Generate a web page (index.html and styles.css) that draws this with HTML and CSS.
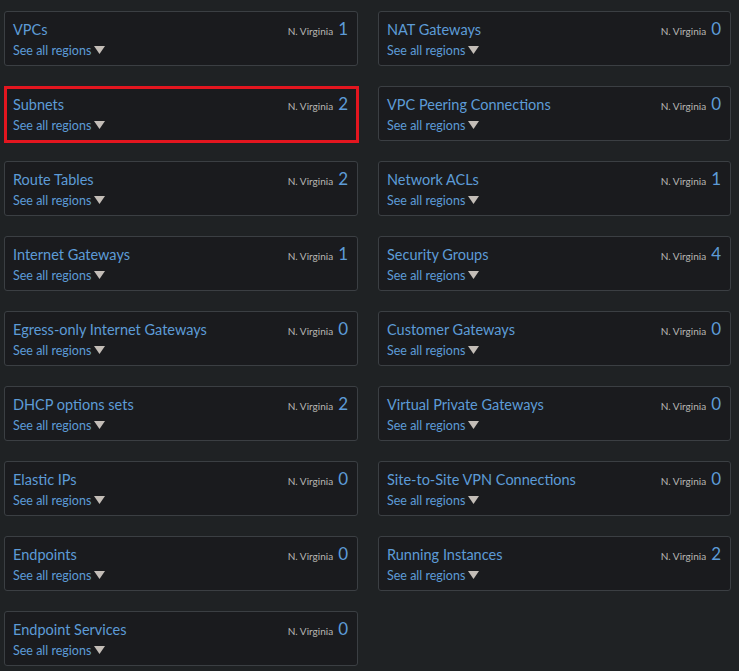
FILE: index.html
```html
<!DOCTYPE html>
<html>
<head>
<meta charset="utf-8">
<link rel="stylesheet" href="styles.css">
</head>
<body>
<div class="grid">
  <div class="card"><div class="row"><a class="title">VPCs</a><span class="meta"><span class="region">N. Virginia</span><span class="count">1</span></span></div><a class="link">See all regions<svg class="tri" viewBox="0 0 11 8"><path d="M0 0H11L5.5 8Z"/></svg></a></div>
  <div class="card"><div class="row"><a class="title">NAT Gateways</a><span class="meta"><span class="region">N. Virginia</span><span class="count">0</span></span></div><a class="link">See all regions<svg class="tri" viewBox="0 0 11 8"><path d="M0 0H11L5.5 8Z"/></svg></a></div>
  <div class="card hl"><div class="row"><a class="title">Subnets</a><span class="meta"><span class="region">N. Virginia</span><span class="count">2</span></span></div><a class="link">See all regions<svg class="tri" viewBox="0 0 11 8"><path d="M0 0H11L5.5 8Z"/></svg></a></div>
  <div class="card"><div class="row"><a class="title">VPC Peering Connections</a><span class="meta"><span class="region">N. Virginia</span><span class="count">0</span></span></div><a class="link">See all regions<svg class="tri" viewBox="0 0 11 8"><path d="M0 0H11L5.5 8Z"/></svg></a></div>
  <div class="card"><div class="row"><a class="title">Route Tables</a><span class="meta"><span class="region">N. Virginia</span><span class="count">2</span></span></div><a class="link">See all regions<svg class="tri" viewBox="0 0 11 8"><path d="M0 0H11L5.5 8Z"/></svg></a></div>
  <div class="card"><div class="row"><a class="title">Network ACLs</a><span class="meta"><span class="region">N. Virginia</span><span class="count">1</span></span></div><a class="link">See all regions<svg class="tri" viewBox="0 0 11 8"><path d="M0 0H11L5.5 8Z"/></svg></a></div>
  <div class="card"><div class="row"><a class="title">Internet Gateways</a><span class="meta"><span class="region">N. Virginia</span><span class="count">1</span></span></div><a class="link">See all regions<svg class="tri" viewBox="0 0 11 8"><path d="M0 0H11L5.5 8Z"/></svg></a></div>
  <div class="card"><div class="row"><a class="title">Security Groups</a><span class="meta"><span class="region">N. Virginia</span><span class="count">4</span></span></div><a class="link">See all regions<svg class="tri" viewBox="0 0 11 8"><path d="M0 0H11L5.5 8Z"/></svg></a></div>
  <div class="card"><div class="row"><a class="title">Egress-only Internet Gateways</a><span class="meta"><span class="region">N. Virginia</span><span class="count">0</span></span></div><a class="link">See all regions<svg class="tri" viewBox="0 0 11 8"><path d="M0 0H11L5.5 8Z"/></svg></a></div>
  <div class="card"><div class="row"><a class="title">Customer Gateways</a><span class="meta"><span class="region">N. Virginia</span><span class="count">0</span></span></div><a class="link">See all regions<svg class="tri" viewBox="0 0 11 8"><path d="M0 0H11L5.5 8Z"/></svg></a></div>
  <div class="card"><div class="row"><a class="title">DHCP options sets</a><span class="meta"><span class="region">N. Virginia</span><span class="count">2</span></span></div><a class="link">See all regions<svg class="tri" viewBox="0 0 11 8"><path d="M0 0H11L5.5 8Z"/></svg></a></div>
  <div class="card"><div class="row"><a class="title">Virtual Private Gateways</a><span class="meta"><span class="region">N. Virginia</span><span class="count">0</span></span></div><a class="link">See all regions<svg class="tri" viewBox="0 0 11 8"><path d="M0 0H11L5.5 8Z"/></svg></a></div>
  <div class="card"><div class="row"><a class="title">Elastic IPs</a><span class="meta"><span class="region">N. Virginia</span><span class="count">0</span></span></div><a class="link">See all regions<svg class="tri" viewBox="0 0 11 8"><path d="M0 0H11L5.5 8Z"/></svg></a></div>
  <div class="card"><div class="row"><a class="title">Site-to-Site VPN Connections</a><span class="meta"><span class="region">N. Virginia</span><span class="count">0</span></span></div><a class="link">See all regions<svg class="tri" viewBox="0 0 11 8"><path d="M0 0H11L5.5 8Z"/></svg></a></div>
  <div class="card"><div class="row"><a class="title">Endpoints</a><span class="meta"><span class="region">N. Virginia</span><span class="count">0</span></span></div><a class="link">See all regions<svg class="tri" viewBox="0 0 11 8"><path d="M0 0H11L5.5 8Z"/></svg></a></div>
  <div class="card"><div class="row"><a class="title">Running Instances</a><span class="meta"><span class="region">N. Virginia</span><span class="count">2</span></span></div><a class="link">See all regions<svg class="tri" viewBox="0 0 11 8"><path d="M0 0H11L5.5 8Z"/></svg></a></div>
  <div class="card"><div class="row"><a class="title">Endpoint Services</a><span class="meta"><span class="region">N. Virginia</span><span class="count">0</span></span></div><a class="link">See all regions<svg class="tri" viewBox="0 0 11 8"><path d="M0 0H11L5.5 8Z"/></svg></a></div>
</div>
</body>
</html>
```
FILE: styles.css
```css
html, body {
  margin: 0;
  padding: 0;
  background: #1f2224;
  height: 100%;
}
body {
  font-family: Lato, "Open Sans", sans-serif;
  overflow: hidden;
}
.grid {
  display: grid;
  grid-template-columns: 354px 353px;
  column-gap: 20px;
  row-gap: 20px;
  align-items: start;
  padding: 11px 8px 0 4px;
}
.card {
  box-sizing: border-box;
  height: 55px;
  background: #1a1b1e;
  border: 1px solid #3b3f43;
  border-radius: 3px;
  padding: 7px 9px 0 8px;
}
.card.hl {
  border: 3px solid #e3161f;
  border-radius: 0;
  padding: 5px 8px 0 6px;
  height: 57px;
  width: 355px;
  margin-bottom: -2px;
}
.row {
  display: flex;
  justify-content: space-between;
  align-items: baseline;
  height: 20px;
  line-height: 20px;
}
.title {
  color: #5d9bd7;
  font-size: 14.5px;
}
.meta {
  display: flex;
  align-items: baseline;
}
.region {
  color: #b8b6b4;
  font-size: 10px;
  margin-right: 5px;
}
.count {
  color: #5d9bd7;
  font-size: 17px;
}
.link {
  display: flex;
  align-items: center;
  height: 22px;
  color: #5d9bd7;
  font-size: 12.5px;
}
.tri {
  width: 11px;
  height: 8px;
  margin-left: 3px;
  fill: #c3bdb7;
}
```
